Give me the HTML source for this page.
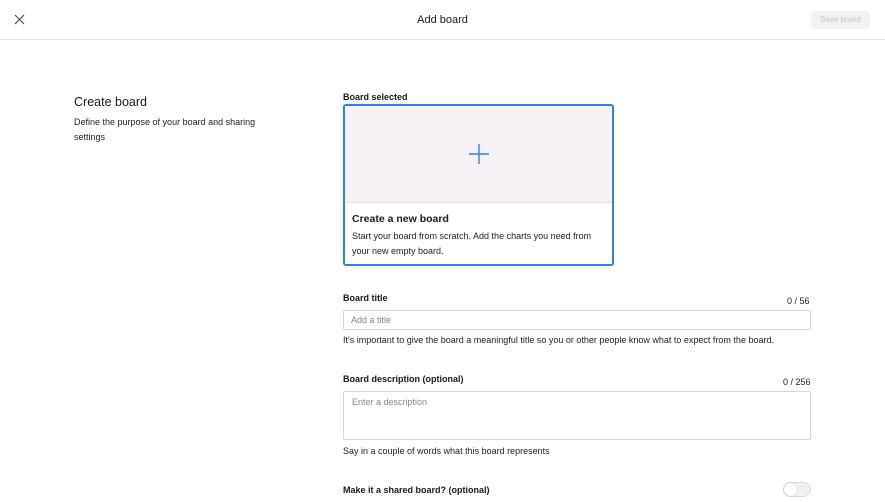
<!DOCTYPE html>
<html><head><meta charset="utf-8"><style>
*{box-sizing:border-box;margin:0;padding:0}
body{width:885px;height:502px;overflow:hidden;background:#fff;font-family:"Liberation Sans",sans-serif;color:#1a1a1a;position:relative}
.a{position:absolute;white-space:nowrap}
.hdr{position:absolute;left:0;top:0;width:885px;height:40px;border-bottom:1px solid #e8e4ec}
.lbl{font-size:9px;font-weight:bold}
.sm{font-size:9px;color:#222}
</style></head><body>
<div class="hdr"></div>
<svg class="a" style="left:14px;top:14px" width="11" height="11" viewBox="0 0 11 11"><path d="M1 1L10 10M10 1L1 10" stroke="#444" stroke-width="1.1"/></svg>
<div class="a" style="left:0;width:885px;text-align:center;top:14px;font-size:11px;font-weight:500">Add board</div>
<div class="a" style="left:811px;top:11px;width:59px;height:18px;background:#f3f1f4;border-radius:3px;color:#c7c3ca;font-size:8px;text-align:center;line-height:18px">Save board</div>

<div class="a" style="left:74px;top:95px;font-size:12.5px">Create board</div>
<div class="a sm" style="left:74px;top:115px;line-height:15px;white-space:normal;width:200px">Define the purpose of your board and sharing settings</div>

<div class="a lbl" style="left:343px;top:92px">Board selected</div>
<div class="a" style="left:343px;top:104px;width:271px;height:162px;border:2px solid #2f80ed;border-radius:3px;overflow:hidden;white-space:normal">
 <div style="height:97px;background:#f6f1f4;border-bottom:1px solid #e6e1e6;position:relative">
  <svg style="position:absolute;left:124px;top:38px" width="20" height="20" viewBox="0 0 20 20"><path d="M10 0V20M0 10H20" stroke="#2f80ed" stroke-width="1.4"/></svg>
 </div>
 <div style="padding:10px 7px 0">
  <div style="font-size:10.5px;font-weight:bold;margin-bottom:4px">Create a new board</div>
  <div class="sm" style="line-height:15px;width:250px">Start your board from scratch. Add the charts you need from your new empty board.</div>
 </div>
</div>

<div class="a lbl" style="left:343px;top:293px">Board title</div>
<div class="a sm" style="left:787px;top:296px">0 / 56</div>
<div class="a" style="left:343px;top:310px;width:468px;height:20px;border:1px solid #d8d5db;border-radius:2px;font-size:9px;color:#888;padding:4px 7px">Add a title</div>
<div class="a sm" style="left:343px;top:335px">It's important to give the board a meaningful title so you or other people know what to expect from the board.</div>

<div class="a lbl" style="left:343px;top:374px">Board description (optional)</div>
<div class="a sm" style="left:783px;top:377px">0 / 256</div>
<div class="a" style="left:343px;top:391px;width:468px;height:49px;border:1px solid #d8d5db;border-radius:2px;font-size:9px;color:#888;padding:5px 8px">Enter a description</div>
<div class="a sm" style="left:343px;top:446px">Say in a couple of words what this board represents</div>

<div class="a lbl" style="left:343px;top:485px">Make it a shared board? (optional)</div>
<div class="a" style="left:783px;top:482px;width:28px;height:15px;border-radius:8px;background:#f2f0f3;border:1px solid #dcd8de"><div style="width:13px;height:13px;border-radius:50%;background:#fff;box-shadow:0 0 1px #999"></div></div>
</body></html>
